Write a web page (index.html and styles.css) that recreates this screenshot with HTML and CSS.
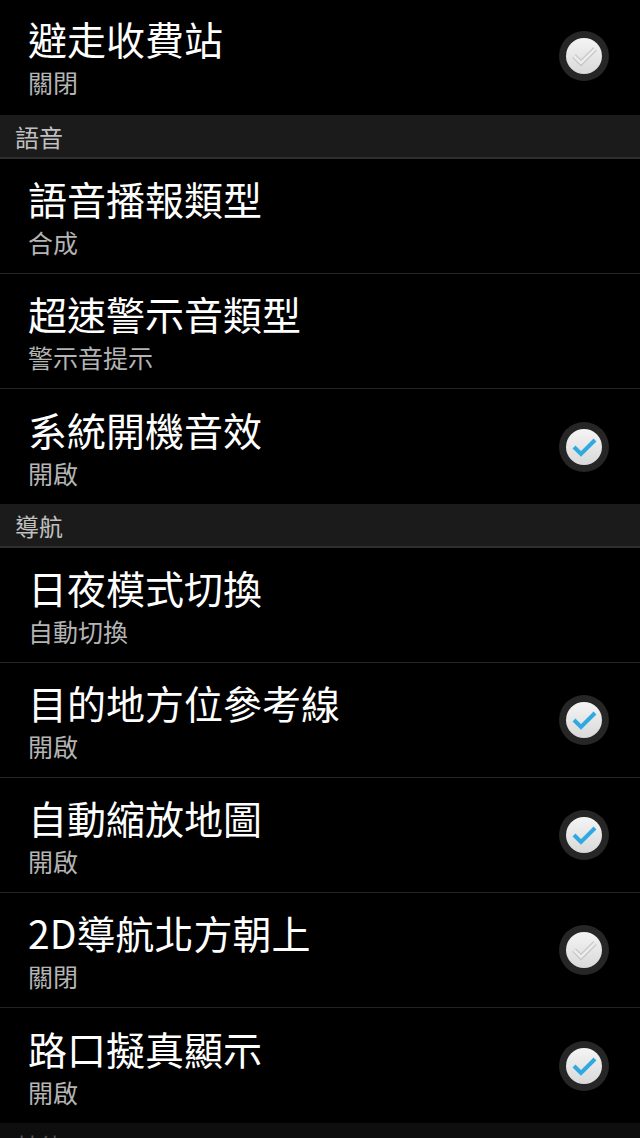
FILE: index.html
```html
<!DOCTYPE html>
<html lang="zh-Hant">
  <head>
    <meta charset="UTF-8" />
    <meta name="viewport" content="width=device-width, initial-scale=1.0" />
    <title>設定</title>
    <link rel="stylesheet" href="styles.css">
  </head>
  <body>
    <div class="settings">
      <div class="pref">
        <div class="pref-text">
          <div class="pref-title">避走收費站</div>
          <div class="pref-summary">關閉</div>
        </div>
        <svg class="check" viewBox="0 0 52 52">
          <circle cx="26" cy="26" r="25" fill="#262626" />
          <circle cx="26" cy="26" r="18" fill="url(#knob)" />
          <path d="M16 26 L23 33 L37 19" fill="none" stroke="#c4c4c4" stroke-width="5" />
          <path d="M16 26 L23 33 L37 19" fill="none" stroke="#ececec" stroke-width="2.6" />
        </svg>
      </div>

      <div class="category">語音</div>

      <div class="pref">
        <div class="pref-text">
          <div class="pref-title">語音播報類型</div>
          <div class="pref-summary">合成</div>
        </div>
      </div>
      <div class="pref">
        <div class="pref-text">
          <div class="pref-title">超速警示音類型</div>
          <div class="pref-summary">警示音提示</div>
        </div>
      </div>
      <div class="pref last">
        <div class="pref-text">
          <div class="pref-title">系統開機音效</div>
          <div class="pref-summary">開啟</div>
        </div>
        <svg class="check" viewBox="0 0 52 52">
          <circle cx="26" cy="26" r="25" fill="#262626" />
          <circle cx="26" cy="26" r="18" fill="url(#knob)" />
          <path d="M16 26 L23 33 L37 19" fill="none" stroke="#2fa9e0" stroke-width="4" />
        </svg>
      </div>

      <div class="category">導航</div>

      <div class="pref">
        <div class="pref-text">
          <div class="pref-title">日夜模式切換</div>
          <div class="pref-summary">自動切換</div>
        </div>
      </div>
      <div class="pref">
        <div class="pref-text">
          <div class="pref-title">目的地方位參考線</div>
          <div class="pref-summary">開啟</div>
        </div>
        <svg class="check" viewBox="0 0 52 52">
          <circle cx="26" cy="26" r="25" fill="#262626" />
          <circle cx="26" cy="26" r="18" fill="url(#knob)" />
          <path d="M16 26 L23 33 L37 19" fill="none" stroke="#2fa9e0" stroke-width="4" />
        </svg>
      </div>
      <div class="pref">
        <div class="pref-text">
          <div class="pref-title">自動縮放地圖</div>
          <div class="pref-summary">開啟</div>
        </div>
        <svg class="check" viewBox="0 0 52 52">
          <circle cx="26" cy="26" r="25" fill="#262626" />
          <circle cx="26" cy="26" r="18" fill="url(#knob)" />
          <path d="M16 26 L23 33 L37 19" fill="none" stroke="#2fa9e0" stroke-width="4" />
        </svg>
      </div>
      <div class="pref">
        <div class="pref-text">
          <div class="pref-title">2D導航北方朝上</div>
          <div class="pref-summary">關閉</div>
        </div>
        <svg class="check" viewBox="0 0 52 52">
          <circle cx="26" cy="26" r="25" fill="#262626" />
          <circle cx="26" cy="26" r="18" fill="url(#knob)" />
          <path d="M16 26 L23 33 L37 19" fill="none" stroke="#c4c4c4" stroke-width="5" />
          <path d="M16 26 L23 33 L37 19" fill="none" stroke="#ececec" stroke-width="2.6" />
        </svg>
      </div>
      <div class="pref last">
        <div class="pref-text">
          <div class="pref-title">路口擬真顯示</div>
          <div class="pref-summary">開啟</div>
        </div>
        <svg class="check" viewBox="0 0 52 52">
          <circle cx="26" cy="26" r="25" fill="#262626" />
          <circle cx="26" cy="26" r="18" fill="url(#knob)" />
          <path d="M16 26 L23 33 L37 19" fill="none" stroke="#2fa9e0" stroke-width="4" />
        </svg>
      </div>

      <div class="category dim">其他</div>
    </div>

    <svg class="defs" width="0" height="0">
      <defs>
        <linearGradient id="knob" x1="0" y1="0" x2="0" y2="1">
          <stop offset="0" stop-color="#f4f4f4" />
          <stop offset="1" stop-color="#d9d9d9" />
        </linearGradient>
      </defs>
    </svg>
  </body>
</html>
```

FILE: styles.css
```css
* {
  box-sizing: border-box;
  margin: 0;
  padding: 0;
}

body {
  font-family: "Noto Sans CJK TC", "Noto Sans", sans-serif;
  background-color: #000000;
  color: #ffffff;
  overflow: hidden;
}

.settings {
  display: flex;
  flex-direction: column;
}

.pref {
  height: 115px;
  display: flex;
  align-items: center;
  justify-content: space-between;
  padding: 0 30px 0 28px;
  border-bottom: 1px solid #242424;
}

.pref.last {
  border-bottom: none;
}

/* list is scrolled a little, first row sits higher */
.pref:first-child {
  padding-bottom: 4px;
  border-bottom: none;
}

.pref-text {
  display: flex;
  flex-direction: column;
}

.pref-title {
  font-size: 39px;
  line-height: 46px;
  color: #ffffff;
}

.pref-summary {
  font-size: 25px;
  line-height: 30px;
  margin-top: 6px;
  color: #b4b4b4;
}

.check {
  width: 52px;
  height: 52px;
  flex-shrink: 0;
}

.category {
  height: 44px;
  display: flex;
  align-items: center;
  padding-left: 15px;
  font-size: 24px;
  color: #c0c0c0;
  background-color: #1b1b1b;
  border-bottom: 2px solid #2e2e2e;
}

.category.dim {
  background-color: #0e0e0e;
  color: #555555;
  border-bottom: none;
}

.defs {
  position: absolute;
}
```
